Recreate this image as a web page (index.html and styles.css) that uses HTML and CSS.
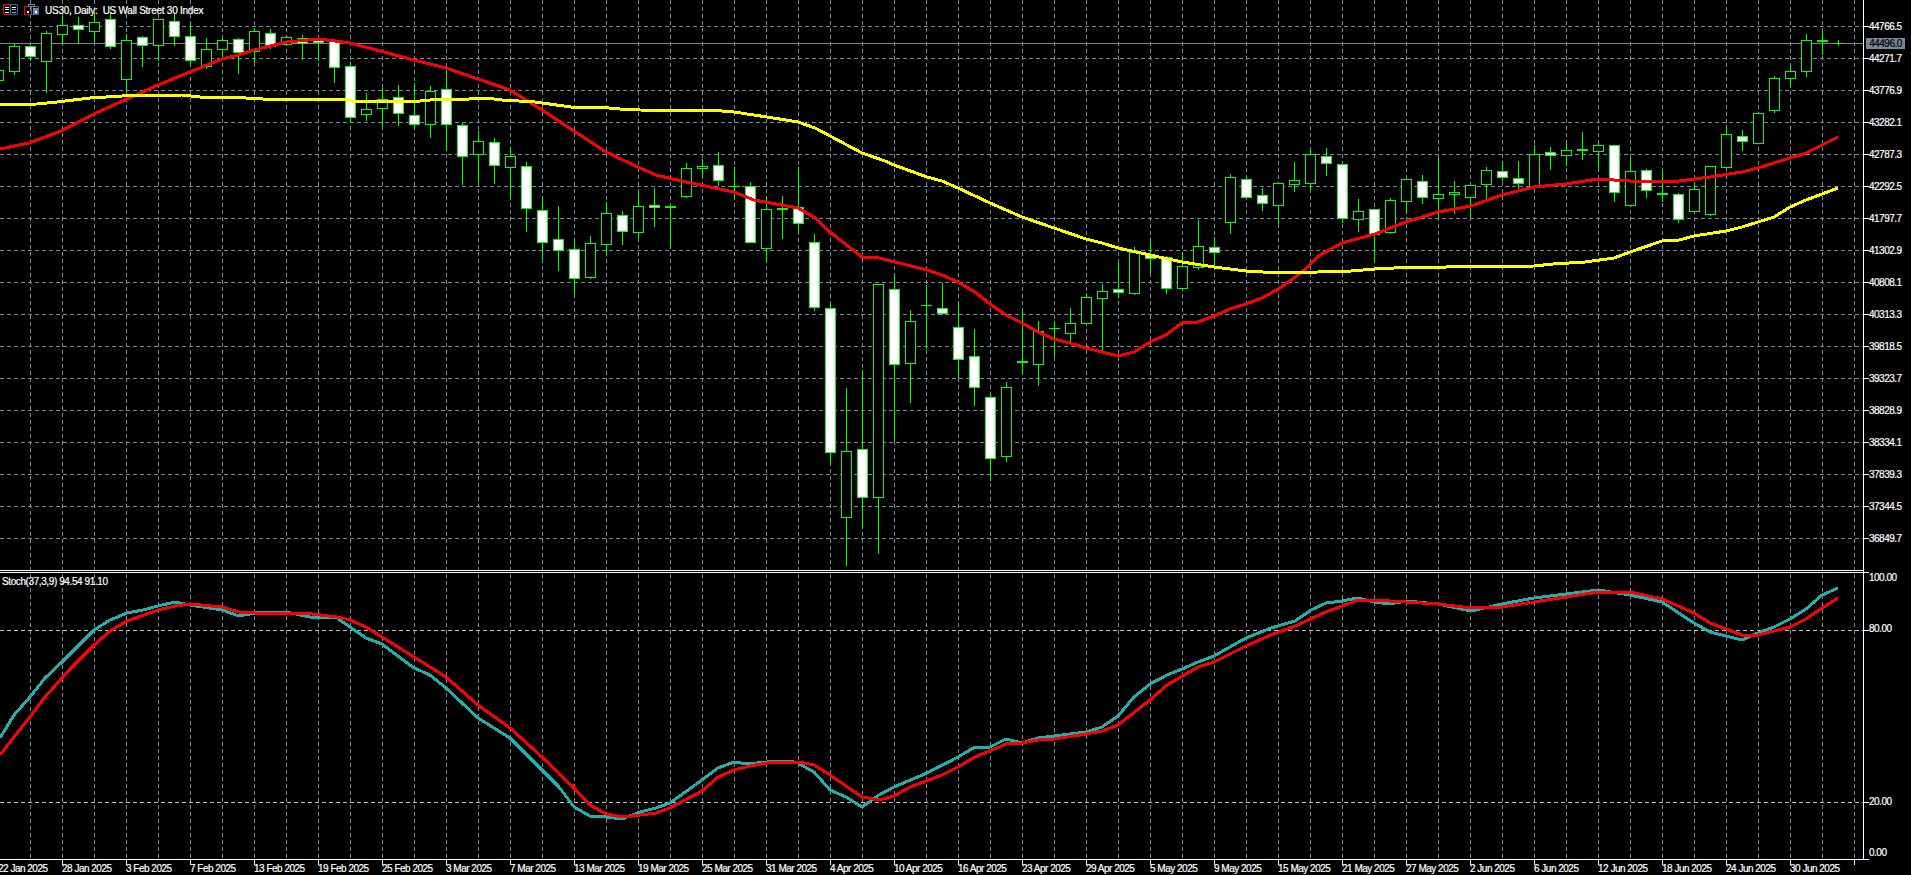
FILE: index.html
```html
<!DOCTYPE html>
<html lang="en">
<head>
  <meta charset="UTF-8">
  <meta name="viewport" content="width=device-width, initial-scale=1.0">
  <title>US30, Daily</title>
  <link rel="stylesheet" href="styles.css">
</head>
<body>
  <div class="terminal">
    <svg id="chart" class="chart" width="1911" height="875"></svg>

    <div class="pane pane-price">
      <svg class="legend-icon" width="15" height="12" viewBox="0 0 15 12">
        <path class="icon-red" d="M.5.5h7v10h-7z"/>
        <path class="icon-blue" d="M7.5.5h7v10h-7z"/>
        <path class="icon-white" d="M2 3h4v1H2zM2 5h4v1H2zM2 8h4v1H2zM9 3h4v1H9z"/>
        <path class="icon-grey" d="M9 5h4v1H9zM9 8h4v1H9z"/>
      </svg>
      <svg class="legend-icon" width="16" height="12" viewBox="0 0 16 12">
        <path class="icon-red" d="M.5 2.5h7v8h-7z"/>
        <path class="icon-blue" d="M7.5 2.5h7v8h-7z"/>
        <path class="icon-fill-grey" d="M4 0h7v1H4zM4 1h1v2H4zM10 1h1v2h-1zM5 2h5v1H5zM9 4h5v6H9z"/>
        <path class="icon-white" d="M3 7h2v2H3zM11 7h2v2h-2z"/>
      </svg>
      <span class="legend-text">US30, Daily:&nbsp; US Wall Street 30 Index</span>
    </div>

    <div class="axis-price">
      <span>44766.5</span>
      <span>44271.7</span>
      <span>43776.9</span>
      <span>43282.1</span>
      <span>42787.3</span>
      <span>42292.5</span>
      <span>41797.7</span>
      <span>41302.9</span>
      <span>40808.1</span>
      <span>40313.3</span>
      <span>39818.5</span>
      <span>39323.7</span>
      <span>38828.9</span>
      <span>38334.1</span>
      <span>37839.3</span>
      <span>37344.5</span>
      <span>36849.7</span>
      <span class="price-tag">44496.0</span>
    </div>

    <div class="pane pane-stoch">
      <span class="legend-text">Stoch(37,3,9) 94.54 91.10</span>
    </div>

    <div class="axis-stoch">
      <span>100.00</span>
      <span>80.00</span>
      <span>20.00</span>
      <span>0.00</span>
    </div>

    <div class="axis-time">
      <span>22 Jan 2025</span>
      <span>28 Jan 2025</span>
      <span>3 Feb 2025</span>
      <span>7 Feb 2025</span>
      <span>13 Feb 2025</span>
      <span>19 Feb 2025</span>
      <span>25 Feb 2025</span>
      <span>3 Mar 2025</span>
      <span>7 Mar 2025</span>
      <span>13 Mar 2025</span>
      <span>19 Mar 2025</span>
      <span>25 Mar 2025</span>
      <span>31 Mar 2025</span>
      <span>4 Apr 2025</span>
      <span>10 Apr 2025</span>
      <span>16 Apr 2025</span>
      <span>23 Apr 2025</span>
      <span>29 Apr 2025</span>
      <span>5 May 2025</span>
      <span>9 May 2025</span>
      <span>15 May 2025</span>
      <span>21 May 2025</span>
      <span>27 May 2025</span>
      <span>2 Jun 2025</span>
      <span>6 Jun 2025</span>
      <span>12 Jun 2025</span>
      <span>18 Jun 2025</span>
      <span>24 Jun 2025</span>
      <span>30 Jun 2025</span>
    </div>
  </div>

  <script src="app.js"></script>
</body>
</html>
```

FILE: styles.css
```css
:root {
  --bg-color: #000000;
  --text-color: #FFFFFF;
  --grid: #778899;
}

html, body {
  margin: 0;
  padding: 0;
  background-color: var(--bg-color);
  overflow: hidden;
}

.terminal {
  position: relative;
  width: 1911px;
  height: 875px;
  display: grid;
  grid-template-columns: 1863px 48px;
  grid-template-rows: 572px 288px 15px;
  color: var(--text-color);
  font-family: "Liberation Sans", Arial, sans-serif;
  font-size: 10px;
  letter-spacing: -0.5px;
  -webkit-text-stroke: 0.2px currentColor;
}

.chart {
  position: absolute;
  top: 0;
  left: 0;
  shape-rendering: crispEdges;
}

.pane {
  position: relative;
  display: flex;
  align-items: flex-start;
}

.pane-price {
  padding: 4px 0 0 3px;
  gap: 6px;
}

.pane-price .legend-text {
  margin-left: -1px;
  letter-spacing: -0.25px;
}

.pane-stoch {
  padding: 3px 0 0 2px;
}

.pane-stoch .legend-text {
  letter-spacing: -0.4px;
}

.legend-text {
  line-height: 13px;
  white-space: nowrap;
}

.legend-icon {
  display: block;
  flex: none;
}

.icon-red { fill: none; stroke: #FF0000; }
.icon-blue { fill: none; stroke: #1F6FA8; }
.icon-white { fill: #FFFFFF; }
.icon-grey { fill: #9DB0C0; }
.icon-fill-grey { fill: #778899; }

.axis-price {
  position: relative;
  padding: 11px 0 0 6px;
  display: flex;
  flex-direction: column;
}

.axis-price span {
  height: 32px;
  line-height: 32px;
}

.axis-price .price-tag {
  position: absolute;
  top: 38px;
  left: 3px;
  width: 39px;
  height: 11px;
  line-height: 11px;
  text-align: center;
  background-color: var(--grid);
  color: #000000;
}

.axis-stoch {
  padding-left: 6px;
  display: grid;
  grid-template-rows: 51px 173px 51px 12px;
  line-height: 12px;
}

.axis-time {
  grid-column: 1 / -1;
  margin-left: -2px;
  display: flex;
  line-height: 18px;
  white-space: nowrap;
}

.axis-time span {
  flex: none;
  width: 64px;
}
```

FILE: app.js
```js
// [high, body top, body bottom, low, filled] in screen pixels, one per day
const candles = [
  [70,70,80,80,0],[43,46,71,74,0],[46,46,56,60,1],[31,33,61,92,0],[16,25,34,43,0],[17,25,29,43,1],
  [12,22,31,41,0],[13,19,46,48,1],[34,40,79,91,0],[36,37,45,66,1],[19,19,45,60,0],[13,21,36,45,1],
  [23,36,60,64,1],[38,49,66,68,0],[38,40,49,58,0],[38,39,52,73,1],[29,31,51,62,0],[29,33,46,48,1],
  [36,37,44,44,0],[35,38,43,59,1],[38,40,42,60,1],[40,41,67,82,1],[62,66,117,122,1],[93,109,114,120,0],
  [88,99,108,125,0],[85,97,113,125,1],[83,115,124,128,1],[86,91,124,137,0],[70,89,124,150,1],[123,125,156,184,1],
  [131,141,154,181,0],[138,142,165,183,1],[147,156,167,198,0],[162,166,208,231,1],[197,210,242,259,1],[206,239,250,270,1],
  [239,249,278,293,1],[236,243,277,278,0],[202,213,244,255,0],[211,215,231,244,1],[191,206,232,237,0],[188,205,207,226,1],
  [206,206,207,247,0],[163,168,196,197,0],[159,166,168,177,0],[152,165,180,185,1],[167,186,186,198,0],[182,186,242,242,1],
  [197,209,248,261,0],[196,208,209,238,0],[167,207,223,231,1],[234,242,307,310,1],[304,308,452,463,1],[388,451,517,565,0],
  [370,449,497,528,1],[284,284,497,553,0],[275,289,364,440,1],[310,321,363,402,0],[285,305,305,348,0],[283,308,313,314,1],
  [302,327,359,377,1],[329,356,387,405,1],[394,397,458,480,1],[382,387,456,461,0],[311,361,362,373,0],[321,331,364,385,0],
  [321,328,328,356,0],[308,323,333,343,0],[293,297,323,324,0],[284,291,298,350,0],[262,289,292,297,1],[247,252,293,294,0],
  [238,255,258,272,1],[256,257,288,293,1],[252,266,288,289,0],[220,246,267,269,0],[237,247,252,265,1],[174,177,222,233,0],
  [177,179,197,199,1],[188,195,203,210,1],[183,183,205,223,0],[162,180,184,191,0],[149,154,183,189,0],[148,156,163,175,1],
  [164,164,218,222,1],[199,211,219,231,0],[209,209,234,261,1],[198,200,232,233,0],[179,179,201,213,0],[175,181,197,203,1],
  [158,194,198,218,0],[181,192,194,213,0],[185,185,197,217,0],[167,170,184,200,0],[161,171,177,180,1],[161,178,183,191,1],
  [145,154,186,187,0],[147,152,155,169,1],[143,150,155,165,0],[132,149,150,159,0],[143,145,151,169,0],[145,145,192,201,1],
  [158,171,205,206,0],[169,170,190,197,1],[171,193,194,201,0],[193,194,219,222,1],[182,189,211,212,0],[166,166,214,215,0],
  [125,134,167,168,0],[130,136,141,150,1],[112,113,143,143,0],[76,78,110,112,0],[65,71,78,85,0],[34,40,71,76,0],
  [30,40,41,54,0],[40,43,43,45,0]
];

const maFast = "0,149 29,143 61,131 94,114 127,99 158,85 190,72 222,59 238,55 254,50 287,42 318,39 335,41 350,43 414,60 446,68 478,79 510,90 542,110 574,131 606,152 640,168 656,175 686,182 734,192 754,200 798,208 814,217 830,232 862,257 879,258 927,270 942,275 958,282 975,292 990,304 1006,315 1022,323 1038,332 1054,339 1070,343 1086,348 1102,352 1118,356 1134,352 1150,342 1166,335 1182,323 1198,322 1214,316 1230,309 1246,304 1262,298 1280,288 1287,283 1302,272 1320,255 1342,243 1375,234 1390,228 1406,222 1438,212 1471,206 1502,195 1534,187 1566,184 1598,179 1630,181 1646,182 1679,181 1710,177 1742,172 1758,168 1790,158 1806,153 1822,145 1838,137";

const maSlow = "0,105 37,104 57,102 90,98 122,96 182,95 200,97 229,97 263,99 343,99 351,101 408,102 420,101 441,99 469,99 486,98 502,100 535,102 571,107 598,107 620,109 640,110 681,111 709,110 734,112 767,117 798,122 815,128 830,136 862,153 885,161 894,165 927,177 942,181 958,188 990,203 1022,217 1054,228 1086,239 1102,243 1118,248 1150,255 1182,262 1214,267 1246,271 1280,273 1318,272 1351,271 1375,269 1414,267 1446,267 1534,266 1553,264 1585,262 1614,258 1630,252 1662,241 1679,240 1694,236 1726,231 1742,227 1774,217 1790,207 1806,200 1822,194 1838,188";

const stochMain = "0,738 14,715 30,697 45,678 62,662 94,630 110,620 127,613 143,610 158,606 175,602 190,605 222,610 239,616 255,613 286,612 310,617 337,618 350,627 366,638 382,644 414,668 430,675 446,688 478,718 510,738 542,770 559,787 574,807 590,816 606,817 622,819 640,812 656,808 670,803 702,780 718,768 734,762 748,764 767,762 789,761 798,763 814,772 830,790 846,797 862,807 879,795 894,787 927,773 958,757 975,747 990,747 1006,739 1022,743 1038,738 1054,736 1086,732 1102,727 1118,716 1134,697 1150,684 1167,675 1182,669 1198,662 1214,656 1246,638 1271,628 1295,621 1311,610 1326,603 1342,601 1358,598 1374,602 1390,604 1406,601 1438,604 1471,611 1502,604 1534,598 1566,594 1598,590 1630,595 1662,602 1694,623 1710,632 1726,636 1742,640 1758,633 1774,627 1790,619 1806,609 1822,595 1838,588";

const stochSignal = "0,755 14,737 30,717 45,697 71,668 94,645 110,631 127,621 158,610 175,606 190,604 222,607 239,612 255,613 304,613 337,617 350,620 366,627 382,637 414,657 446,677 478,705 510,728 542,757 574,788 590,805 606,814 622,817 640,815 656,813 670,808 702,791 718,777 734,770 750,766 767,763 798,762 814,765 830,775 862,797 879,800 894,796 910,787 942,775 958,767 975,757 1006,744 1022,743 1038,740 1054,739 1086,734 1102,731 1118,725 1150,700 1167,685 1198,667 1214,662 1246,646 1271,635 1295,626 1326,612 1358,600 1374,600 1406,602 1438,604 1471,608 1502,607 1534,602 1566,597 1598,592 1630,592 1662,599 1694,613 1710,623 1742,635 1758,635 1790,627 1806,619 1822,608 1838,598";

const svg = [];

function line(x1, y1, x2, y2, color, extra) {
  svg.push(`<line x1="${x1}" y1="${y1}" x2="${x2}" y2="${y2}" stroke="${color}" ${extra || ''}/>`);
}

function polyline(points, color) {
  svg.push(`<polyline points="${points}" fill="none" stroke="${color}" stroke-width="3" stroke-linejoin="round"/>`);
}

// Grid
const dash = 'stroke-dasharray="4 3"';
for (let x = 30; x < 1863; x += 32) {
  line(x + 0.5, 0, x + 0.5, 859, '#778899', dash);
}
for (let y = 26; y <= 538; y += 32) {
  line(0, y + 0.5, 1863, y + 0.5, '#778899', dash);
}
line(0, 630.5, 1863, 630.5, '#C0C0C0', dash);
line(0, 802.5, 1863, 802.5, '#C0C0C0', dash);

// Bid line
line(0, 43.5, 1863, 43.5, '#778899');

// Candles
candles.forEach(([high, top, bottom, low, filled], i) => {
  const x = -2 + 16 * i;
  line(x + 0.5, high, x + 0.5, low + 1, '#00FF00');
  if (top === bottom) {
    line(x - 5, top + 0.5, x + 6, top + 0.5, '#00FF00');
  } else {
    const fill = filled ? '#FFFFFF' : '#000000';
    svg.push(`<rect x="${x - 4.5}" y="${top + 0.5}" width="10" height="${bottom - top}" fill="${fill}" stroke="#00FF00"/>`);
  }
});

// Moving averages and stochastic
polyline(maFast, '#FF0000');
polyline(maSlow, '#FFFF00');
polyline(stochMain, '#20B2AA');
polyline(stochSignal, '#FF0000');

// Pane divider and axes
line(0, 570.5, 1863, 570.5, '#FFFFFF');
line(0, 572.5, 1863, 572.5, '#FFFFFF');
line(1863.5, 0, 1863.5, 860, '#FFFFFF');
line(0, 859.5, 1864, 859.5, '#FFFFFF');

for (let y = 26; y <= 538; y += 32) {
  line(1864, y + 0.5, 1869, y + 0.5, '#FFFFFF');
}
[572, 630, 802, 859].forEach((y) => line(1864, y + 0.5, 1869, y + 0.5, '#FFFFFF'));
for (let x = 62; x < 1863; x += 64) {
  line(x + 0.5, 860, x + 0.5, 865, '#FFFFFF');
}

document.getElementById('chart').innerHTML = svg.join('');
```
